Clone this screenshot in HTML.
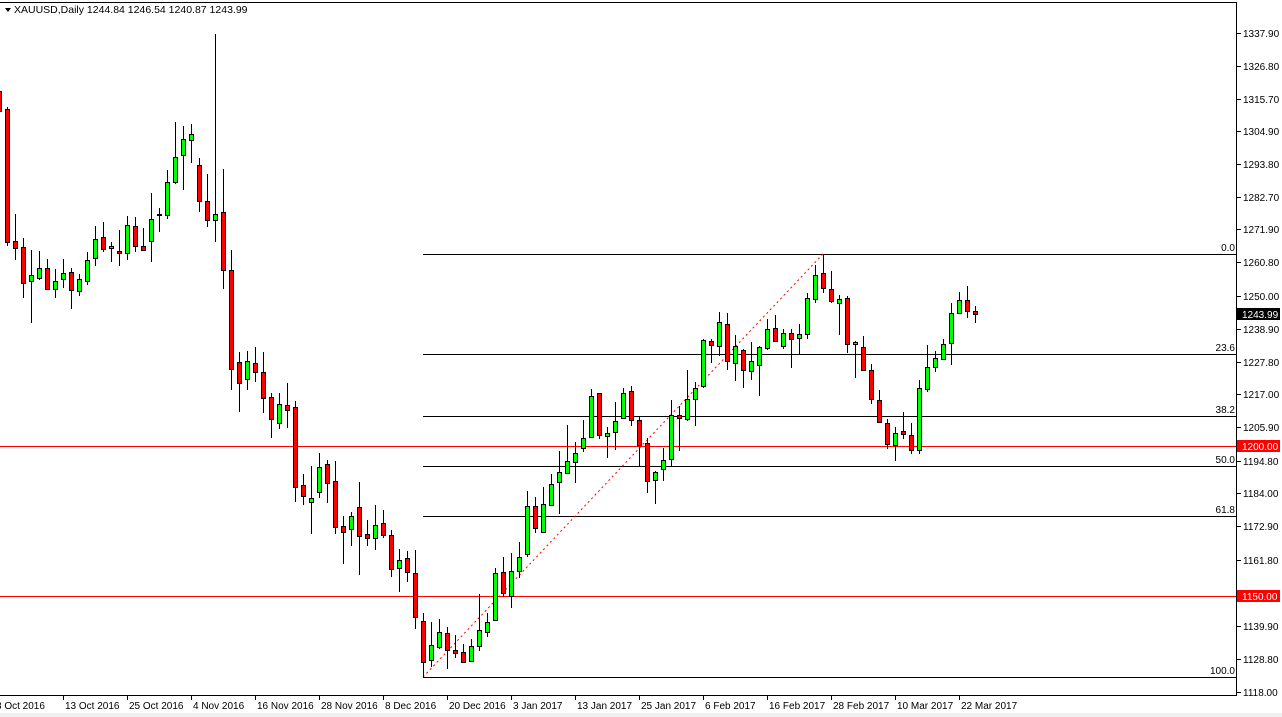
<!DOCTYPE html>
<html><head><meta charset="utf-8"><style>
html,body{margin:0;padding:0;background:#fff;width:1282px;height:717px;overflow:hidden}
svg{display:block}
text{font-family:"Liberation Sans",sans-serif;font-size:10px}
</style></head><body>
<svg id="s" width="1282" height="717" xmlns="http://www.w3.org/2000/svg">
<rect x="0" y="0" width="1282" height="717" fill="#fff"/>
<rect x="0" y="713" width="1282" height="4" fill="#f0f0f0"/>
<line x1="0" y1="2.5" x2="1237" y2="2.5" stroke="#000"/>
<line x1="1236.5" y1="2" x2="1236.5" y2="695" stroke="#000"/>
<line x1="0" y1="695.5" x2="1237" y2="695.5" stroke="#000"/>
<g id="g"></g>
<polygon points="5,8 11,8 8,12" fill="#000"/>
<text x="14" y="13" style="font-size:10.5px">XAUUSD,Daily  1244.84 1246.54 1240.87 1243.99</text>
</svg>
<script>
var g=document.getElementById('g'),ns="http://www.w3.org/2000/svg";
function el(t,a,txt){var e=document.createElementNS(ns,t);for(var k in a)e.setAttribute(k,a[k]);if(txt)e.textContent=txt;(a.p||g).appendChild(e);return e;}
var fib=[[254,"0.0"],[354,"23.6"],[416,"38.2"],[466,"50.0"],[516,"61.8"],[677,"100.0"]];
fib.forEach(function(f){el('line',{x1:423,y1:f[0]+.5,x2:1236,y2:f[0]+.5,stroke:'#000'});el('text',{x:1235,y:f[0]-3,'text-anchor':'end'},f[1]);});
el('line',{x1:0,y1:446.5,x2:1236,y2:446.5,stroke:'#f00'});
el('line',{x1:0,y1:596.5,x2:1236,y2:596.5,stroke:'#f00'});
el('line',{x1:423,y1:677,x2:823,y2:254,stroke:'#f00','stroke-dasharray':'2,3'});
var d=[
[-1,'R',85,91,111,118],
[7,'R',107,109,242,246],[15,'R',214,241,248,260],[23,'R',238,247,283,298],[31,'G',250,275,281,323],[39,'G',251,268,278,280],[47,'R',259,268,289,289],[55,'G',269,281,289,298],[63,'G',259,273,279,288],[71,'R',268,272,290,309],[79,'G',274,279,291,296],[87,'G',252,260,281,285],[95,'G',226,239,258,266],[103,'R',222,237,249,252],[111,'G',242,246,248,262],[119,'R',230,251,253,266],[127,'G',216,225,253,260],[135,'R',217,226,246,252],[143,'R',228,246,250,251],[151,'G',193,219,241,262],[159,'R',208,214,215,232],[167,'G',170,182,215,219],[175,'G',122,157,182,184],[183,'G',126,139,155,190],[191,'G',124,134,140,163],[199,'R',158,165,201,212],[207,'R',174,201,220,227],[215,'G',34,214,220,242],[223,'R',169,212,270,289],[231,'R',250,270,369,390],
[239,'R',352,362,383,412],[247,'G',351,361,379,390],[255,'R',347,363,372,382],[263,'R',352,372,398,413],[271,'R',393,397,419,438],[279,'G',393,404,423,429],[287,'R',383,405,410,428],[295,'R',401,407,487,502],[303,'R',474,485,496,505],[311,'G',466,498,502,534],[319,'G',453,467,492,498],[327,'R',460,464,483,503],[335,'R',461,481,527,534],[343,'R',516,526,532,564],[351,'G',512,516,529,546],[359,'R',482,507,536,575],[367,'R',520,534,538,546],[375,'G',505,525,538,550],[383,'R',510,523,535,538],[391,'R',530,535,569,577],[399,'G',549,560,568,592],[407,'R',551,558,572,582],[415,'R',550,573,617,629],[423,'R',613,621,662,678],[431,'G',622,645,660,667],[439,'G',619,632,647,649],[447,'R',627,633,650,669],[455,'R',635,650,653,658],[463,'R',644,652,662,663],[471,'G',639,646,661,662],[479,'G',594,630,646,651],[487,'G',613,622,632,637],[495,'G',568,573,620,621],[503,'R',557,572,593,597],[511,'G',553,571,596,608],[519,'G',542,557,571,578],[527,'G',491,506,554,557],
[535,'R',497,506,528,533],[543,'G',487,504,532,533],[551,'G',474,484,505,505],[559,'G',451,472,482,514],[567,'G',425,461,473,474],[575,'G',442,453,462,483],[583,'G',420,438,448,452],[591,'G',389,396,437,438],[599,'R',393,393,435,439],[607,'G',427,433,436,458],[615,'G',402,421,432,450],[623,'G',388,393,418,418],[631,'R',386,391,420,426],[639,'R',417,420,445,466],[647,'R',438,443,481,493],[655,'G',471,472,480,504],[663,'G',448,460,469,481],[671,'G',400,415,459,466],[679,'R',406,415,418,451],[687,'G',370,399,419,421],[695,'G',382,388,399,426],[703,'G',339,340,386,388],[711,'R',339,341,345,363],[719,'G',312,322,346,356],[727,'R',313,324,361,370],[735,'G',335,346,363,381],
[743,'R',349,350,370,388],[751,'G',342,361,371,380],[759,'G',346,347,365,396],[767,'G',319,329,348,350],[775,'R',315,328,341,341],[783,'G',329,333,346,349],[791,'R',329,333,339,368],[799,'G',324,334,338,355],[807,'G',293,298,334,339],[815,'G',265,275,299,303],[823,'R',254,273,288,293],[831,'R',271,289,301,303],[839,'G',295,299,303,335],[847,'R',296,298,344,353],[855,'G',341,342,344,378],[863,'R',336,347,370,371],[871,'R',364,370,399,404],[879,'R',390,400,422,422],[887,'R',419,423,444,449],[895,'G',427,433,445,461],[903,'R',412,431,434,439],[911,'R',423,435,450,454],[919,'G',380,388,450,454],[927,'G',345,367,389,392],[935,'G',351,358,367,372],[943,'G',339,344,359,360],[951,'G',303,313,343,365],[959,'G',292,300,313,314],[967,'R',286,300,311,318],[975,'R',306,311,314,323]];
d.forEach(function(c){var x=c[0];
el('line',{x1:x+.5,y1:c[2],x2:x+.5,y2:c[5],stroke:'#000'});
var h=Math.max(1,c[4]-c[3]);
el('rect',{x:x-1.5,y:c[3]+.5,width:4,height:h,fill:c[1]=='R'?'#f00':'#0f0',stroke:'#000'});});
var ax=[[33,"1337.90"],[66,"1326.80"],[99,"1315.70"],[131,"1304.90"],[164,"1293.80"],[197,"1282.70"],[229,"1271.90"],[262,"1260.80"],[296,"1250.00"],[329,"1238.90"],[362,"1227.80"],[394,"1217.00"],[427,"1205.90"],[461,"1194.80"],[493,"1184.00"],[526,"1172.90"],[560,"1161.80"],[626,"1139.90"],[659,"1128.80"],[692,"1118.00"]];
ax.forEach(function(a){el('line',{x1:1237,y1:a[0]+.5,x2:1241,y2:a[0]+.5,stroke:'#000'});el('text',{x:1243,y:a[0]+4},a[1]);});
function tag(y,bg,t){el('rect',{x:1237,y:y-6,width:43,height:12,fill:bg});el('text',{x:1242,y:y+4,fill:'#fff'},t);}
tag(314,'#000','1243.99');tag(446,'#f00','1200.00');tag(596,'#f00','1150.00');
var dt=[[-6,"3 Oct 2016"],[63,"13 Oct 2016"],[127,"25 Oct 2016"],[191,"4 Nov 2016"],[255,"16 Nov 2016"],[319,"28 Nov 2016"],[383,"8 Dec 2016"],[447,"20 Dec 2016"],[511,"3 Jan 2017"],[575,"13 Jan 2017"],[639,"25 Jan 2017"],[703,"6 Feb 2017"],[767,"16 Feb 2017"],[831,"28 Feb 2017"],[895,"10 Mar 2017"],[959,"22 Mar 2017"]];
dt.forEach(function(a){if(a[0]>0)el('line',{x1:a[0]+.5,y1:695,x2:a[0]+.5,y2:700,stroke:'#000'});el('text',{x:a[0]+2,y:709},a[1]);});
</script>
</body></html>
